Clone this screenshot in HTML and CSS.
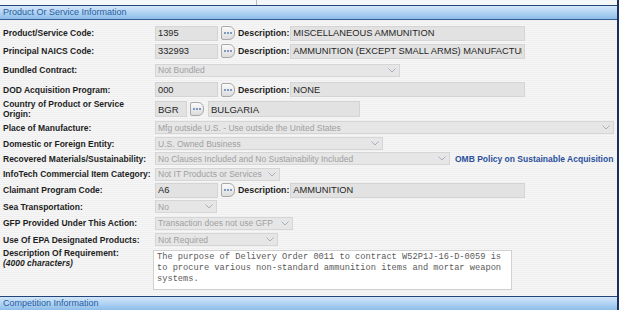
FILE: index.html
```html
<!DOCTYPE html>
<html>
<head>
<meta charset="utf-8">
<link rel="stylesheet" href="styles.css">
</head>
<body>
<div class="page">
  <div class="topstrip"><div class="ts-left"></div><div class="ts-right"></div></div>
  <div class="section-head">Product Or Service Information</div>
  <div class="form">
    <div class="row h18">
      <div class="lbl">Product/Service Code:</div>
      <div class="fld">
        <input class="inp code" value="1395" readonly>
        <span class="btn"><svg width="10" height="4" viewBox="0 0 10 4"><circle cx="2" cy="2" r="0.9"/><circle cx="5" cy="2" r="0.9"/><circle cx="8" cy="2" r="0.9"/></svg></span>
        <span class="dlbl">Description:</span>
        <input class="inp desc" value="MISCELLANEOUS AMMUNITION" readonly>
      </div>
    </div>
    <div class="row h18">
      <div class="lbl">Principal NAICS Code:</div>
      <div class="fld">
        <input class="inp code" value="332993" readonly>
        <span class="btn"><svg width="10" height="4" viewBox="0 0 10 4"><circle cx="2" cy="2" r="0.9"/><circle cx="5" cy="2" r="0.9"/><circle cx="8" cy="2" r="0.9"/></svg></span>
        <span class="dlbl">Description:</span>
        <input class="inp desc" value="AMMUNITION (EXCEPT SMALL ARMS) MANUFACTURING" readonly>
      </div>
    </div>
    <div class="row h20">
      <div class="lbl">Bundled Contract:</div>
      <div class="fld">
        <div class="sel w245"><span>Not Bundled</span><svg width="8" height="5" viewBox="0 0 8 5"><polyline points="0.5,0.5 4,4 7.5,0.5"/></svg></div>
      </div>
    </div>
    <div class="row h19">
      <div class="lbl">DOD Acquisition Program:</div>
      <div class="fld">
        <input class="inp code" value="000" readonly>
        <span class="btn"><svg width="10" height="4" viewBox="0 0 10 4"><circle cx="2" cy="2" r="0.9"/><circle cx="5" cy="2" r="0.9"/><circle cx="8" cy="2" r="0.9"/></svg></span>
        <span class="dlbl">Description:</span>
        <input class="inp desc" value="NONE" readonly>
      </div>
    </div>
    <div class="row h20">
      <div class="lbl two">Country of Product or Service<br>Origin:</div>
      <div class="fld">
        <input class="inp big cty" value="BGR" readonly>
        <span class="btn b2"><svg width="10" height="4" viewBox="0 0 10 4"><circle cx="2" cy="2" r="0.9"/><circle cx="5" cy="2" r="0.9"/><circle cx="8" cy="2" r="0.9"/></svg></span>
        <input class="inp big ctyname" value="BULGARIA" readonly>
      </div>
    </div>
    <div class="row h17">
      <div class="lbl">Place of Manufacture:</div>
      <div class="fld">
        <div class="sel w459"><span>Mfg outside U.S. - Use outside the United States</span><svg width="8" height="5" viewBox="0 0 8 5"><polyline points="0.5,0.5 4,4 7.5,0.5"/></svg></div>
      </div>
    </div>
    <div class="row h15">
      <div class="lbl">Domestic or Foreign Entity:</div>
      <div class="fld">
        <div class="sel w228"><span>U.S. Owned Business</span><svg width="8" height="5" viewBox="0 0 8 5"><polyline points="0.5,0.5 4,4 7.5,0.5"/></svg></div>
      </div>
    </div>
    <div class="row h15">
      <div class="lbl">Recovered Materials/Sustainability:</div>
      <div class="fld">
        <div class="sel w295"><span>No Clauses Included and No Sustainability Included</span><svg width="8" height="5" viewBox="0 0 8 5"><polyline points="0.5,0.5 4,4 7.5,0.5"/></svg></div>
        <a class="link" href="#">OMB Policy on Sustainable Acquisition</a>
      </div>
    </div>
    <div class="row h16">
      <div class="lbl">InfoTech Commercial Item Category:</div>
      <div class="fld">
        <div class="sel w125"><span>Not IT Products or Services</span><svg width="8" height="5" viewBox="0 0 8 5"><polyline points="0.5,0.5 4,4 7.5,0.5"/></svg></div>
      </div>
    </div>
    <div class="row h16">
      <div class="lbl">Claimant Program Code:</div>
      <div class="fld">
        <input class="inp code" value="A6" readonly>
        <span class="btn"><svg width="10" height="4" viewBox="0 0 10 4"><circle cx="2" cy="2" r="0.9"/><circle cx="5" cy="2" r="0.9"/><circle cx="8" cy="2" r="0.9"/></svg></span>
        <span class="dlbl">Description:</span>
        <input class="inp desc" value="AMMUNITION" readonly>
      </div>
    </div>
    <div class="row h17">
      <div class="lbl">Sea Transportation:</div>
      <div class="fld">
        <div class="sel w62"><span>No</span><svg width="8" height="5" viewBox="0 0 8 5"><polyline points="0.5,0.5 4,4 7.5,0.5"/></svg></div>
      </div>
    </div>
    <div class="row h16">
      <div class="lbl">GFP Provided Under This Action:</div>
      <div class="fld">
        <div class="sel w138"><span>Transaction does not use GFP</span><svg width="8" height="5" viewBox="0 0 8 5"><polyline points="0.5,0.5 4,4 7.5,0.5"/></svg></div>
      </div>
    </div>
    <div class="row h17">
      <div class="lbl">Use Of EPA Designated Products:</div>
      <div class="fld">
        <div class="sel w123"><span>Not Required</span><svg width="8" height="5" viewBox="0 0 8 5"><polyline points="0.5,0.5 4,4 7.5,0.5"/></svg></div>
      </div>
    </div>
    <div class="row descrow">
      <div class="lbl two">Description Of Requirement:<br><i>(4000 characters)</i></div>
      <div class="fld top">
        <textarea class="ta" readonly>The purpose of Delivery Order 0011 to contract W52P1J-16-D-0059 is to procure various non-standard ammunition items and mortar weapon systems.</textarea>
      </div>
    </div>
  </div>
  <div class="section-head">Competition Information</div>
</div>
</body>
</html>
```

FILE: styles.css
```css
html, body {
  margin: 0;
  padding: 0;
  background: #ffffff;
}
body {
  font-family: "Liberation Sans", Arial, sans-serif;
  color: #1c1c1c;
}
.page {
  width: 617px;
  height: 310px;
  border-right: 2px solid #1d2f5c;
  background: repeating-linear-gradient(to bottom, #efefef 0, #efefef 1px, #f6f6f6 1px, #f6f6f6 2px);
  overflow: hidden;
}
.topstrip {
  height: 5px;
  display: flex;
  background: #f4f6f8;
}
.ts-left {
  width: 256px;
  border-right: 1px solid #b8bcc4;
}
.ts-right {
  flex: 1;
}
.section-head {
  height: 13px;
  border-top: 1px solid #24457a;
  border-bottom: 1px solid #335d93;
  background: linear-gradient(to bottom, #d3e6f9 0%, #b4d5f4 45%, #8dbde9 100%);
  color: #2a5c9e;
  font-size: 9px;
  line-height: 13px;
  padding-left: 3px;
  white-space: nowrap;
}
.form {
  padding-top: 4px;
  height: 272px;
}
.row {
  display: flex;
  align-items: center;
}
.h15 { height: 15px; }
.h16 { height: 16px; }
.h17 { height: 17px; }
.h18 { height: 18px; }
.h19 { height: 19px; }
.h20 { height: 20px; }
.lbl {
  width: 152px;
  padding-left: 3px;
  font-size: 8.5px;
  font-weight: bold;
  line-height: 10px;
  color: #1e1e1e;
  white-space: nowrap;
}
.lbl i {
  font-style: italic;
}
.fld {
  display: flex;
  align-items: center;
  flex: 1;
}
.inp {
  box-sizing: border-box;
  height: 15px;
  margin: 0;
  padding: 0 2px;
  border: 1px solid #d4d4d4;
  background: #e2e2e2;
  font-family: "Liberation Sans", Arial, sans-serif;
  font-size: 9.3px;
  color: #262626;
  outline: none;
}
.inp.code {
  width: 63px;
}
.inp.desc {
  width: 235px;
  margin-left: 1px;
}
.inp.big {
  height: 16px;
  font-size: 9.5px;
}
.inp.cty {
  width: 32px;
}
.inp.ctyname {
  width: 152px;
  margin-left: 4px;
}
.btn {
  box-sizing: border-box;
  width: 14px;
  height: 14px;
  margin-left: 3px;
  border: 1px solid #a9a9a9;
  border-radius: 2px 6px 6px 2px;
  background: linear-gradient(to bottom, #fbfbfb, #dcdcdc);
  display: flex;
  align-items: center;
  justify-content: center;
}
.btn svg {
  fill: #4d74aa;
}
.btn.b2 {
  margin-left: 3px;
}
.dlbl {
  margin-left: 3px;
  font-size: 8.8px;
  font-weight: bold;
  color: #1e1e1e;
  white-space: nowrap;
}
.sel {
  box-sizing: border-box;
  height: 13px;
  border: 1px solid #d5d5d5;
  background: #e6e6e6;
  display: flex;
  align-items: center;
  justify-content: space-between;
  padding: 0 3px 0 2px;
  font-size: 8.5px;
  color: #a0a0a0;
  white-space: nowrap;
  overflow: hidden;
}
.sel svg {
  flex: none;
  fill: none;
  stroke: #a6b0c0;
  stroke-width: 1;
}
.w245 { width: 245px; }
.w459 { width: 459px; }
.w228 { width: 228px; }
.w295 { width: 295px; }
.w125 { width: 125px; }
.w62 { width: 62px; }
.w138 { width: 138px; }
.w123 { width: 123px; }
.link {
  margin-left: 5px;
  font-size: 8.5px;
  font-weight: bold;
  color: #2b509c;
  text-decoration: none;
  white-space: nowrap;
}
.descrow {
  height: 48px;
  align-items: flex-start;
}
.descrow .lbl {
  line-height: 9.5px;
  padding-top: 1px;
}
.fld.top {
  align-items: flex-start;
}
.ta {
  box-sizing: border-box;
  width: 359px;
  height: 40px;
  margin: 2px 0 0 -2px;
  padding: 1px 3px;
  border: 1px solid #d0d0d0;
  background: #ffffff;
  font-family: "Liberation Mono", "DejaVu Sans Mono", monospace;
  font-size: 8.7px;
  line-height: 11px;
  color: #5a5a5a;
  resize: none;
  overflow: hidden;
  outline: none;
}
```
